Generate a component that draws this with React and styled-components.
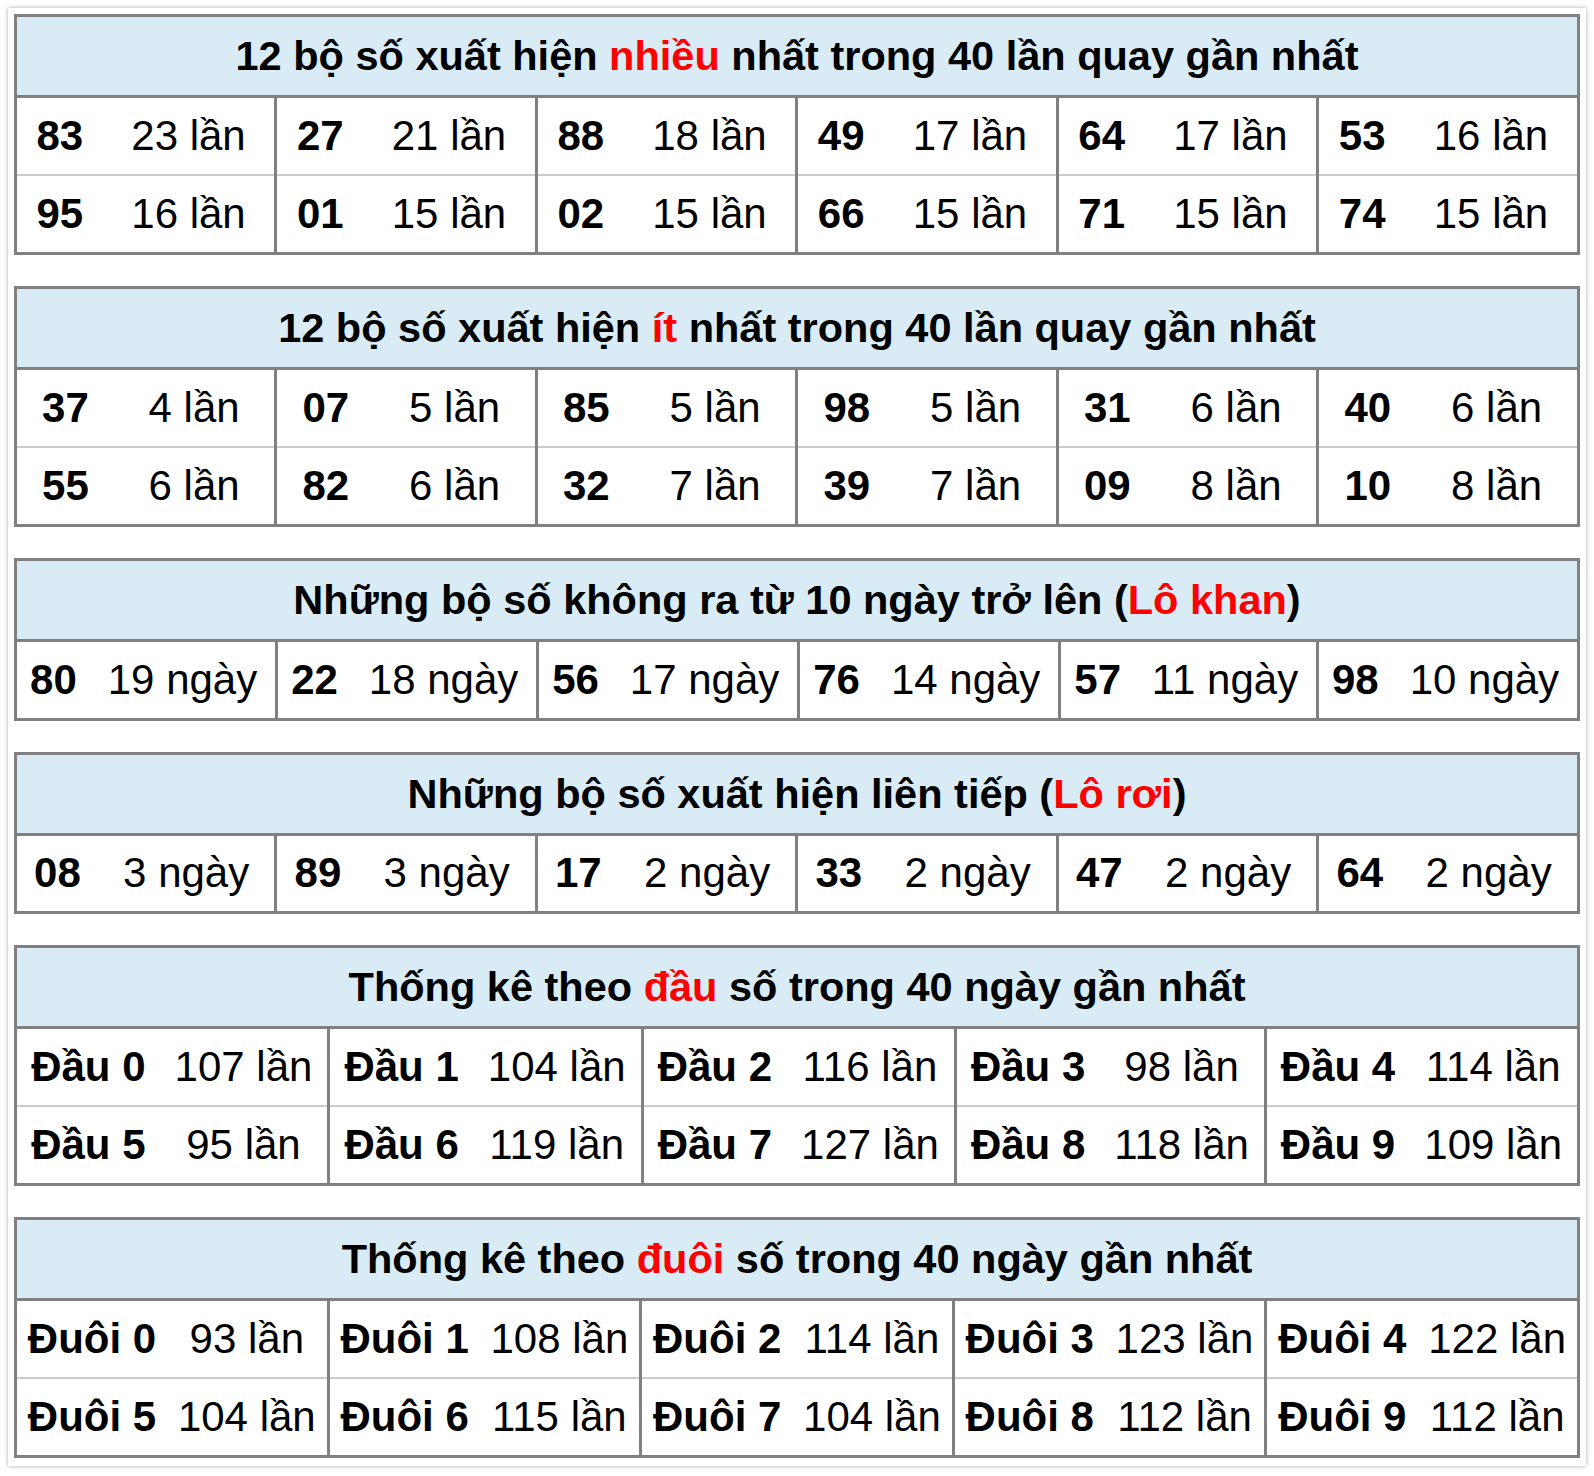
import React from "react";
import styled, { createGlobalStyle } from "styled-components";

const GlobalStyle = createGlobalStyle`
  html, body {
    margin: 0;
    padding: 0;
    background: #ffffff;
  }
  body {
    font-family: "Liberation Sans", Arial, Helvetica, sans-serif;
    color: #000;
  }
`;

const Frame = styled.div`
  margin: 8px;
  padding: 6px 6px 8px 6px;
  background: #fff;
  box-shadow: 0 0 4px rgba(0, 0, 0, 0.35);
`;

const Table = styled.table`
  width: 100%;
  border-collapse: collapse;
  border: 3px solid #808080;
  margin-bottom: 31px;
  font-size: 42px;

  &:last-child {
    margin-bottom: 0;
  }
`;

const Head = styled.th`
  height: 78px;
  padding: 0;
  background: #d9ecf6;
  border-bottom: 3px solid #808080;
  font-size: 41.5px;
  font-weight: bold;
  text-align: center;
`;

const Red = styled.span`
  color: #ff0000;
`;

const Row = styled.tr`
  height: 78.5px;
`;

const Num = styled.td`
  padding: 0 10px;
  text-align: center;
  font-weight: bold;
  white-space: nowrap;
  border-bottom: 2px solid #cccccc;
`;

const Count = styled.td`
  padding: 0 10px;
  text-align: center;
  white-space: nowrap;
  border-bottom: 2px solid #cccccc;
  border-right: 3px solid #808080;
`;

const StatTable = ({ title, rows, unit }) => {
  const cols = rows[0].length * 2;
  return (
    <Table>
      <thead>
        <tr>
          <Head colSpan={cols}>{title}</Head>
        </tr>
      </thead>
      <tbody>
        {rows.map((row, i) => (
          <Row key={i}>
            {row.map(([n, c], j) => (
              <React.Fragment key={j}>
                <Num>{n}</Num>
                <Count>
                  {c} {unit}
                </Count>
              </React.Fragment>
            ))}
          </Row>
        ))}
      </tbody>
    </Table>
  );
};

const most = [
  [["83", 23], ["27", 21], ["88", 18], ["49", 17], ["64", 17], ["53", 16]],
  [["95", 16], ["01", 15], ["02", 15], ["66", 15], ["71", 15], ["74", 15]],
];

const least = [
  [["37", 4], ["07", 5], ["85", 5], ["98", 5], ["31", 6], ["40", 6]],
  [["55", 6], ["82", 6], ["32", 7], ["39", 7], ["09", 8], ["10", 8]],
];

const khan = [
  [["80", 19], ["22", 18], ["56", 17], ["76", 14], ["57", 11], ["98", 10]],
];

const roi = [[["08", 3], ["89", 3], ["17", 2], ["33", 2], ["47", 2], ["64", 2]]];

const dau = [
  [["Đầu 0", 107], ["Đầu 1", 104], ["Đầu 2", 116], ["Đầu 3", 98], ["Đầu 4", 114]],
  [["Đầu 5", 95], ["Đầu 6", 119], ["Đầu 7", 127], ["Đầu 8", 118], ["Đầu 9", 109]],
];

const duoi = [
  [["Đuôi 0", 93], ["Đuôi 1", 108], ["Đuôi 2", 114], ["Đuôi 3", 123], ["Đuôi 4", 122]],
  [["Đuôi 5", 104], ["Đuôi 6", 115], ["Đuôi 7", 104], ["Đuôi 8", 112], ["Đuôi 9", 112]],
];

export default function App() {
  return (
    <>
      <GlobalStyle />
      <Frame>
        <StatTable
          title={
            <>
              12 bộ số xuất hiện <Red>nhiều</Red> nhất trong 40 lần quay gần nhất
            </>
          }
          rows={most}
          unit="lần"
        />
        <StatTable
          title={
            <>
              12 bộ số xuất hiện <Red>ít</Red> nhất trong 40 lần quay gần nhất
            </>
          }
          rows={least}
          unit="lần"
        />
        <StatTable
          title={
            <>
              Những bộ số không ra từ 10 ngày trở lên (<Red>Lô khan</Red>)
            </>
          }
          rows={khan}
          unit="ngày"
        />
        <StatTable
          title={
            <>
              Những bộ số xuất hiện liên tiếp (<Red>Lô rơi</Red>)
            </>
          }
          rows={roi}
          unit="ngày"
        />
        <StatTable
          title={
            <>
              Thống kê theo <Red>đầu</Red> số trong 40 ngày gần nhất
            </>
          }
          rows={dau}
          unit="lần"
        />
        <StatTable
          title={
            <>
              Thống kê theo <Red>đuôi</Red> số trong 40 ngày gần nhất
            </>
          }
          rows={duoi}
          unit="lần"
        />
      </Frame>
    </>
  );
}
